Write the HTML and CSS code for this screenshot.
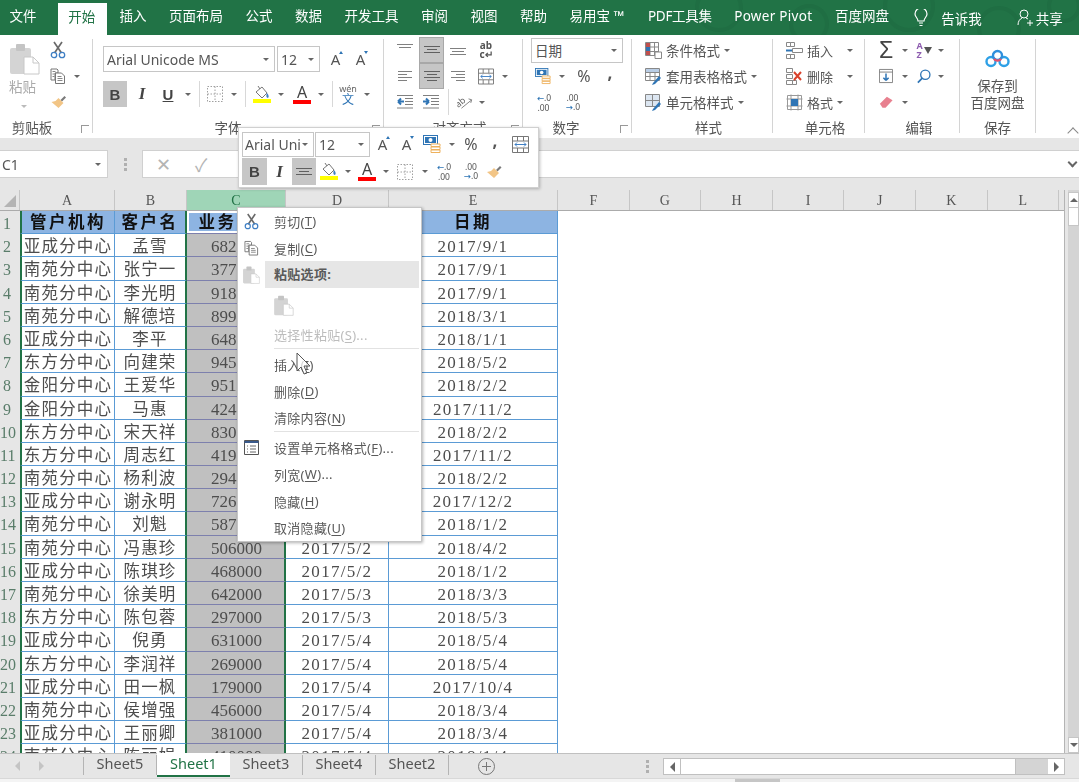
FILE: index.html
```html
<!DOCTYPE html>
<html lang="zh-CN">
<head>
    <meta charset="UTF-8" />
    <title>Excel</title>
    <link rel="stylesheet" href="styles.css">
</head>
<body>
<svg class="defs" width="0" height="0">
    <symbol id="i-scissors" viewBox="0 0 16 18">
        <path d="M4 1l7.5 11M12 1L4.500 12" stroke="#6a6a6a" stroke-width="1.7" fill="none"/>
        <circle cx="4" cy="14" r="2.700" stroke="#3f7fc4" stroke-width="1.300" fill="none"/>
        <circle cx="12" cy="14" r="2.700" stroke="#3f7fc4" stroke-width="1.300" fill="none"/>
    </symbol>
    <symbol id="i-copy" viewBox="0 0 16 16">
        <path d="M1 1h6l1 1v3H5v7H1z" fill="#fff" stroke="#777"/>
        <path d="M5.500 5h6l3 3v7.500h-9z" fill="#fff" stroke="#777"/>
        <path d="M7.500 8.500h4M7.500 10.500h5M7.500 12.500h5M2.500 3.500h3M2.500 6h2M2.500 8.500h2" stroke="#888"/>
    </symbol>
    <symbol id="i-brush" viewBox="0 0 16 14">
        <path d="M10 5l4-4 1.500 1.500-4 4z" fill="#7a7a7a"/>
        <path d="M8 3l5 5-2 2-3 3-7-6 4-1z" fill="#f2c586"/>
    </symbol>
    <symbol id="i-paste" viewBox="0 0 30 32">
        <rect x="0" y="5" width="21" height="26" rx="2" fill="#d4d4d4"/>
        <rect x="6" y="1" width="9" height="7" rx="1" fill="#c4c4c4"/>
        <path d="M14 14h9l6 6v11H14z" fill="#fff" stroke="#c8c8c8"/>
        <path d="M23 14v6h6" fill="none" stroke="#c8c8c8"/>
    </symbol>
    <symbol id="i-fill" viewBox="0 0 18 13">
        <path d="M3 6l6-5 5 6-5 5z" fill="#fff" stroke="#777"/>
        <path d="M5 0l2 3" stroke="#777"/>
        <path d="M14 7c2 2 2 4 1 5-2 0-2-3-1-5z" fill="#3f7fc4"/>
    </symbol>
    <symbol id="i-border" viewBox="0 0 16 16">
        <path d="M.5.5h15v15H.5zM8 .5v15M.5 8h15" fill="none" stroke="#a0a0a0" stroke-dasharray="1.500 1.500"/>
    </symbol>
    <symbol id="i-top" viewBox="0 0 16 12"><path d="M0 .5h16M2 3.500h12" stroke="#808080" fill="none"/></symbol>
    <symbol id="i-mid" viewBox="0 0 16 12"><path d="M0 2.500h16M3 5.500h10M0 8.500h16" stroke="#606060" fill="none"/></symbol>
    <symbol id="i-bot" viewBox="0 0 16 12"><path d="M0 4.500h16M2 7.500h12M0 10.500h16" stroke="#808080" fill="none"/></symbol>
    <symbol id="i-left" viewBox="0 0 14 12"><path d="M0 1.500h14M0 4.500h9M0 7.500h14M0 10.500h9" stroke="#808080" fill="none"/></symbol>
    <symbol id="i-center" viewBox="0 0 16 12"><path d="M0 1.500h16M3 4.500h10M0 7.500h16M3 10.500h10" stroke="#606060" fill="none"/></symbol>
    <symbol id="i-right" viewBox="0 0 14 12"><path d="M0 1.500h14M5 4.500h9M0 7.500h14M5 10.500h9" stroke="#808080" fill="none"/></symbol>
    <symbol id="i-merge" viewBox="0 0 17 17">
        <path d="M.5.5h16v16H.5zM.5 5h16M.5 12h16M5.500.5V5M11.500.5V5M5.500 12v4.500M11.500 12v4.500" fill="none" stroke="#777"/>
        <path d="M3 8.500h11M3 8.500l2-2M3 8.500l2 2M14 8.500l-2-2M14 8.500l-2 2" fill="none" stroke="#3f7fc4"/>
    </symbol>
    <symbol id="i-outdent" viewBox="0 0 16 14">
        <path d="M0 .5h16M8 3.500h8M8 6.500h8M8 9.500h8M0 13h16" stroke="#808080" fill="none"/>
        <path d="M1 6.500h6M1 6.500l3-3M1 6.500l3 3" stroke="#2f75b5" stroke-width="2" fill="none"/>
    </symbol>
    <symbol id="i-indent" viewBox="0 0 16 14">
        <path d="M0 .5h16M8 3.500h8M8 6.500h8M8 9.500h8M0 13h16" stroke="#808080" fill="none"/>
        <path d="M0 6.500h6M6 6.500l-3-3M6 6.500l-3 3" stroke="#2f75b5" stroke-width="2" fill="none"/>
    </symbol>
    <symbol id="i-orient" viewBox="0 0 18 16">
        <text x="0" y="13" font-size="10" font-family="Noto Sans" fill="#666" transform="rotate(-40 3 12)">ab</text>
        <path d="M5 15L16 6M13 4.500l3.500 1-1 3.500" stroke="#777" fill="none"/>
    </symbol>
    <symbol id="i-acct" viewBox="0 0 18 18">
        <rect x=".5" y=".5" width="14" height="9" fill="#fff" stroke="#2f75b5"/>
        <rect x="2" y="2" width="11" height="6" fill="#2f75b5"/>
        <circle cx="7.500" cy="5" r="2" fill="#fff"/>
        <path d="M8 9h9v2.500H8zM8 12h9v2.500H8zM8 15h9v2.500H8z" fill="#fff" stroke="#eeb15c"/>
    </symbol>
    <symbol id="i-cond" viewBox="0 0 17 17">
        <path d="M.5.5h13v13H.5zM5 .5v13M9.500.5v13M.5 5h13M.5 9.500h13" fill="#fff" stroke="#888"/>
        <path d="M1 1h4v4H1z" fill="#c0504d"/><path d="M1 5h4v4H1z" fill="#2f75b5"/><path d="M1 9h4v4H1z" fill="#c0504d"/>
        <path d="M10 10h6.500v6.500H10z" fill="#fff" stroke="#888"/>
    </symbol>
    <symbol id="i-table" viewBox="0 0 17 17">
        <path d="M.5.5h14v12H.5zM5 .5v12M10 .5v12M.5 4.500h14M.5 8.500h14" fill="#fff" stroke="#888"/>
        <path d="M1 1h13v3H1z" fill="#b9cde5"/>
        <path d="M8 15l6-7 2 2-6 6-3 1z" fill="#2f75b5"/>
    </symbol>
    <symbol id="i-style" viewBox="0 0 17 17">
        <path d="M.5.5h14v12H.5zM7.500.5v12M.5 6.500h14" fill="#dce6f1" stroke="#888"/>
        <path d="M8 15l6-7 2 2-6 6-3 1z" fill="#2f75b5"/>
    </symbol>
    <symbol id="i-insert" viewBox="0 0 17 17">
        <path d="M.5.5h4v4h-4zM4.500.5h4v4h-4zM.5 12.500h4v4h-4zM4.500 12.500h4v4h-4z" fill="#fff" stroke="#888"/>
        <path d="M6.500 6.500h10v4h-10z" fill="#fff" stroke="#888"/>
        <path d="M0 8.500h6" stroke="#2f75b5" stroke-width="2"/>
    </symbol>
    <symbol id="i-delete" viewBox="0 0 17 17">
        <path d="M.5.5h6v4h-6zM.5 12.500h6v4h-6zM6.500 12.500h4v4h-4zM.5 6.500h6v4h-6z" fill="#fff" stroke="#888"/>
        <path d="M8 4l7 8M15 4l-7 8" stroke="#d9412b" stroke-width="2"/>
    </symbol>
    <symbol id="i-format" viewBox="0 0 17 17">
        <path d="M1.500 1.500h14v14h-14zM.5 5h16M.5 12h16M5 .5v16M12 .5v16" fill="#fff" stroke="#999"/>
        <path d="M5 5h7v7H5z" fill="#2f75b5"/>
    </symbol>
    <symbol id="i-down" viewBox="0 0 16 16">
        <path d="M.5.5h15v15H.5z" fill="#fff" stroke="#777"/>
        <path d="M.5 3.500h15" stroke="#777"/>
        <path d="M8 5v8M8 13l-3-3M8 13l3-3" stroke="#2f75b5" stroke-width="1.700" fill="none"/>
    </symbol>
    <symbol id="i-search" viewBox="0 0 16 16">
        <circle cx="9.500" cy="6.500" r="5.300" fill="none" stroke="#2f75b5" stroke-width="1.500"/>
        <path d="M6 10.500L1 15.500" stroke="#2f75b5" stroke-width="2"/>
    </symbol>
    <symbol id="i-eraser" viewBox="0 0 16 14">
        <path d="M1 9l8-8 6.500 4-8 8.500H4z" fill="#e8808f"/>
    </symbol>
    <symbol id="i-format-list" viewBox="0 0 15 15">
        <path d="M.5.500h14v14H.5z" fill="#fff" stroke="#555"/>
        <path d="M.5 1h14v2h-14z" fill="#3a5a8c"/>
        <path d="M3 6h1M3 9h1M3 12h1M6 6h6M6 9h6M6 12h6" stroke="#666"/>
    </symbol>
</svg>

<div class="app">
    <nav class="tabs">
        <svg class="swirl" width="400" height="35" viewBox="0 0 400 35"><g fill="none" stroke="#1f6e43" stroke-width="4"><circle cx="40" cy="8" r="22"/><circle cx="130" cy="24" r="18"/><circle cx="230" cy="6" r="24"/><circle cx="320" cy="28" r="20"/><circle cx="385" cy="6" r="15"/></g></svg>
        <a class="tab first">文件</a>
        <a class="tab active">开始</a>
        <a class="tab">插入</a>
        <a class="tab">页面布局</a>
        <a class="tab">公式</a>
        <a class="tab">数据</a>
        <a class="tab">开发工具</a>
        <a class="tab">审阅</a>
        <a class="tab">视图</a>
        <a class="tab">帮助</a>
        <a class="tab">易用宝 ™</a>
        <a class="tab pdf">PDF工具集</a>
        <a class="tab pp">Power Pivot</a>
        <a class="tab">百度网盘</a>
        <span class="tell">
            <svg width="14" height="18" viewBox="0 0 14 18"><path d="M4 12c0-3-3-4-3-7a6 6 0 0 1 12 0c0 3-3 4-3 7zM5 14h4M5.500 16.500h3" fill="none" stroke="#fff" stroke-width="1.200"/></svg>
            告诉我
        </span>
        <span class="share">
            <svg width="16" height="18" viewBox="0 0 16 18"><circle cx="7" cy="5" r="4" fill="none" stroke="#fff"/><path d="M1 16c0-4 2-6 4-7M9 9l2 1M10 14h6M13 11v6" fill="none" stroke="#fff"/></svg>
            共享
        </span>
    </nav>

    <div class="ribbon">
        <section class="group g-clip">
            <div class="clip-body">
                <div class="paste">
                    <svg width="30" height="32"><use href="#i-paste"/></svg>
                    <span>粘贴</span>
                    <i class="car light"></i>
                </div>
                <div class="rows3 clip-tools">
                    <div class="row"><svg width="16" height="18"><use href="#i-scissors"/></svg></div>
                    <div class="row"><svg width="16" height="16"><use href="#i-copy"/></svg><i class="car"></i></div>
                    <div class="row"><svg width="17" height="14"><use href="#i-brush"/></svg></div>
                </div>
            </div>
            <div class="glabel">剪贴板</div>
            <i class="launch"></i>
        </section>

        <section class="group g-font">
            <div class="row font-row1">
                <div class="sel w172">Arial Unicode MS<i class="car"></i></div>
                <div class="sel w43">12<i class="car"></i></div>
                <div class="it w34"><span class="grow">A<i class="up"></i></span></div>
                <div class="it w16"><span class="grow">A<i class="dn"></i></span></div>
            </div>
            <div class="row font-row2">
                <div class="it w24 on bold">B</div>
                <div class="it w30 ital">I</div>
                <div class="it w22 under">U</div>
                <div class="it w18"><i class="car"></i></div>
                <div class="it w4"><i class="vsep"></i></div>
                <div class="it w28"><svg width="16" height="16"><use href="#i-border"/></svg></div>
                <div class="it w10"><i class="car"></i></div>
                <div class="it w12"><i class="vsep"></i></div>
                <div class="it w22 colored"><svg width="18" height="13"><use href="#i-fill"/></svg><i class="bar yellow"></i></div>
                <div class="it w16"><i class="car"></i></div>
                <div class="it w26 colored"><span class="letter">A</span><i class="bar red"></i></div>
                <div class="it w12"><i class="car"></i></div>
                <div class="it w10"><i class="vsep"></i></div>
                <div class="it w22 wen"><small>wén</small><span>文</span></div>
                <div class="it w16"><i class="car"></i></div>
            </div>
            <div class="glabel">字体</div>
            <i class="launch"></i>
        </section>

        <section class="group g-align">
            <div class="rows3">
                <div class="row">
                    <div class="it w16"><svg width="16" height="12"><use href="#i-top"/></svg></div>
                    <i class="w6"></i>
                    <div class="it w25 on box"><svg width="16" height="12"><use href="#i-mid"/></svg></div>
                    <i class="w6"></i>
                    <div class="it w16"><svg width="16" height="12"><use href="#i-bot"/></svg></div>
                    <i class="w12"></i>
                    <div class="it w16 wrap-ic">ab<br>c↵</div>
                </div>
                <div class="row">
                    <div class="it w16"><svg width="14" height="12"><use href="#i-left"/></svg></div>
                    <i class="w6"></i>
                    <div class="it w25 on box"><svg width="16" height="12"><use href="#i-center"/></svg></div>
                    <i class="w6"></i>
                    <div class="it w16"><svg width="14" height="12"><use href="#i-right"/></svg></div>
                    <i class="w12"></i>
                    <div class="it w16"><svg width="17" height="17"><use href="#i-merge"/></svg></div>
                    <div class="it w22"><i class="car"></i></div>
                </div>
                <div class="row">
                    <div class="it w16"><svg width="16" height="14"><use href="#i-outdent"/></svg></div>
                    <i class="w10"></i>
                    <div class="it w16"><svg width="16" height="14"><use href="#i-indent"/></svg></div>
                    <div class="it w18"><i class="vsep"></i></div>
                    <div class="it w16"><svg width="18" height="16"><use href="#i-orient"/></svg></div>
                    <div class="it w18"><i class="car"></i></div>
                </div>
            </div>
            <div class="glabel">对齐方式</div>
            <i class="launch"></i>
        </section>

        <section class="group g-num">
            <div class="rows3">
                <div class="row"><div class="sel w92 date-sel">日期<i class="car"></i></div></div>
                <div class="row">
                    <i class="w4"></i>
                    <div class="it w16"><svg width="18" height="18"><use href="#i-acct"/></svg></div>
                    <div class="it w22"><i class="car"></i></div>
                    <div class="it w22 pct">%</div>
                    <div class="it w30 comma">,</div>
                </div>
                <div class="row">
                    <i class="w6"></i>
                    <div class="it w13 dec"><b>←</b>.0<br>.00</div>
                    <i class="w16"></i>
                    <div class="it w13 dec">.00<br><b>→</b>.0</div>
                </div>
            </div>
            <div class="glabel">数字</div>
            <i class="launch"></i>
        </section>

        <section class="group g-style">
            <div class="rows3">
                <div class="row cmd"><svg width="17" height="17"><use href="#i-cond"/></svg>条件格式<i class="car"></i></div>
                <div class="row cmd"><svg width="17" height="17"><use href="#i-table"/></svg>套用表格格式<i class="car"></i></div>
                <div class="row cmd"><svg width="17" height="17"><use href="#i-style"/></svg>单元格样式<i class="car"></i></div>
            </div>
            <div class="glabel">样式</div>
        </section>

        <section class="group g-cell">
            <div class="rows3">
                <div class="row cmd"><svg width="17" height="17"><use href="#i-insert"/></svg>插入<i class="car far"></i></div>
                <div class="row cmd"><svg width="17" height="17"><use href="#i-delete"/></svg>删除<i class="car far"></i></div>
                <div class="row cmd"><svg width="17" height="17"><use href="#i-format"/></svg>格式<i class="car"></i></div>
            </div>
            <div class="glabel">单元格</div>
        </section>

        <section class="group g-edit">
            <div class="rows3">
                <div class="row">
                    <div class="it w14 sigma">Σ</div>
                    <div class="it w24"><i class="car"></i></div>
                    <div class="it w14 sort"><span>A<br>Z</span><i class="funnel"></i></div>
                    <div class="it w20"><i class="car"></i></div>
                </div>
                <div class="row">
                    <div class="it w14"><svg width="16" height="16"><use href="#i-down"/></svg></div>
                    <div class="it w24"><i class="car"></i></div>
                    <div class="it w14"><svg width="16" height="16"><use href="#i-search"/></svg></div>
                    <div class="it w20"><i class="car"></i></div>
                </div>
                <div class="row">
                    <div class="it w14"><svg width="16" height="14"><use href="#i-eraser"/></svg></div>
                    <div class="it w24"><i class="car"></i></div>
                </div>
            </div>
            <div class="glabel">编辑</div>
        </section>

        <section class="group g-save">
            <div class="save-body">
                <svg width="25" height="19" viewBox="0 0 25 19">
                    <circle cx="6" cy="12.500" r="4.500" fill="none" stroke="#2ea0e6" stroke-width="2.400"/>
                    <circle cx="19" cy="12.500" r="4.500" fill="none" stroke="#2ea0e6" stroke-width="2.400"/>
                    <circle cx="12.500" cy="6.500" r="4.500" fill="none" stroke="#2f8fdc" stroke-width="2.400"/>
                    <path d="M9 10a4.500 4.500 0 0 0 7 0" fill="none" stroke="#e8506a" stroke-width="2.400"/>
                </svg>
                <span>保存到<br>百度网盘</span>
            </div>
            <div class="glabel">保存</div>
        </section>

        <div class="collapse"><i></i></div>
    </div>

    <div class="fbar">
        <div class="namebox">C1<i class="car"></i></div>
        <div class="fdots"><i></i><i></i><i></i></div>
        <div class="finput">
            <span class="fx">✕</span>
            <span class="fx">✓</span>
            <i class="fchev"></i>
        </div>
    </div>

    <div class="sheet-area">
        <div class="sheet-main">
            <div class="colhead">
                <div class="corner"><i></i></div>
                <div class="ch ca">A</div>
                <div class="ch cb">B</div>
                <div class="ch cc on-col">C</div>
                <div class="ch cd">D</div>
                <div class="ch ce">E</div>
                <div class="ch cx">F</div>
                <div class="ch cx">G</div>
                <div class="ch cx">H</div>
                <div class="ch cx">I</div>
                <div class="ch cx">J</div>
                <div class="ch cx">K</div>
                <div class="ch cx">L</div>
            </div>
            <div class="grid">
                <div class="r">1</div><div class="c a h">管户机构</div><div class="c b h">客户名</div><div class="c n h active">业务金额</div><div class="c d h"></div><div class="c e h">日期</div>
                <div class="r">2</div><div class="c a">亚成分中心</div><div class="c b">孟雪</div><div class="c n">682000</div><div class="c d"></div><div class="c e">2017/9/1</div>
                <div class="r">3</div><div class="c a">南苑分中心</div><div class="c b">张宁一</div><div class="c n">377000</div><div class="c d"></div><div class="c e">2017/9/1</div>
                <div class="r">4</div><div class="c a">南苑分中心</div><div class="c b">李光明</div><div class="c n">918000</div><div class="c d"></div><div class="c e">2017/9/1</div>
                <div class="r">5</div><div class="c a">南苑分中心</div><div class="c b">解德培</div><div class="c n">899000</div><div class="c d"></div><div class="c e">2018/3/1</div>
                <div class="r">6</div><div class="c a">亚成分中心</div><div class="c b">李平</div><div class="c n">648000</div><div class="c d"></div><div class="c e">2018/1/1</div>
                <div class="r">7</div><div class="c a">东方分中心</div><div class="c b">向建荣</div><div class="c n">945000</div><div class="c d"></div><div class="c e">2018/5/2</div>
                <div class="r">8</div><div class="c a">金阳分中心</div><div class="c b">王爱华</div><div class="c n">951000</div><div class="c d"></div><div class="c e">2018/2/2</div>
                <div class="r">9</div><div class="c a">金阳分中心</div><div class="c b">马惠</div><div class="c n">424000</div><div class="c d"></div><div class="c e">2017/11/2</div>
                <div class="r">10</div><div class="c a">东方分中心</div><div class="c b">宋天祥</div><div class="c n">830000</div><div class="c d"></div><div class="c e">2018/2/2</div>
                <div class="r">11</div><div class="c a">东方分中心</div><div class="c b">周志红</div><div class="c n">419000</div><div class="c d"></div><div class="c e">2017/11/2</div>
                <div class="r">12</div><div class="c a">南苑分中心</div><div class="c b">杨利波</div><div class="c n">294000</div><div class="c d"></div><div class="c e">2018/2/2</div>
                <div class="r">13</div><div class="c a">亚成分中心</div><div class="c b">谢永明</div><div class="c n">726000</div><div class="c d"></div><div class="c e">2017/12/2</div>
                <div class="r">14</div><div class="c a">南苑分中心</div><div class="c b">刘魁</div><div class="c n">587000</div><div class="c d"></div><div class="c e">2018/1/2</div>
                <div class="r">15</div><div class="c a">南苑分中心</div><div class="c b">冯惠珍</div><div class="c n">506000</div><div class="c d">2017/5/2</div><div class="c e">2018/4/2</div>
                <div class="r">16</div><div class="c a">亚成分中心</div><div class="c b">陈琪珍</div><div class="c n">468000</div><div class="c d">2017/5/2</div><div class="c e">2018/1/2</div>
                <div class="r">17</div><div class="c a">南苑分中心</div><div class="c b">徐美明</div><div class="c n">642000</div><div class="c d">2017/5/3</div><div class="c e">2018/3/3</div>
                <div class="r">18</div><div class="c a">东方分中心</div><div class="c b">陈包蓉</div><div class="c n">297000</div><div class="c d">2017/5/3</div><div class="c e">2018/5/3</div>
                <div class="r">19</div><div class="c a">亚成分中心</div><div class="c b">倪勇</div><div class="c n">631000</div><div class="c d">2017/5/4</div><div class="c e">2018/5/4</div>
                <div class="r">20</div><div class="c a">东方分中心</div><div class="c b">李润祥</div><div class="c n">269000</div><div class="c d">2017/5/4</div><div class="c e">2018/5/4</div>
                <div class="r">21</div><div class="c a">亚成分中心</div><div class="c b">田一枫</div><div class="c n">179000</div><div class="c d">2017/5/4</div><div class="c e">2017/10/4</div>
                <div class="r">22</div><div class="c a">南苑分中心</div><div class="c b">侯增强</div><div class="c n">456000</div><div class="c d">2017/5/4</div><div class="c e">2018/3/4</div>
                <div class="r">23</div><div class="c a">亚成分中心</div><div class="c b">王丽卿</div><div class="c n">381000</div><div class="c d">2017/5/4</div><div class="c e">2018/3/4</div>
                <div class="r">24</div><div class="c a">南苑分中心</div><div class="c b">陈丽娟</div><div class="c n">410000</div><div class="c d">2017/5/4</div><div class="c e">2018/1/4</div>
            </div>
        </div>
        <div class="vscroll">
            <div class="sbtn up-btn"><i class="tri-up"></i></div>
            <div class="thumb"></div>
            <div class="sbtn down-btn"><i class="tri-down"></i></div>
        </div>
    </div>

    <div class="sheetbar">
        <div class="tab-arrows"><i class="tri-l"></i><i class="tri-r"></i></div>
        <div class="stab">Sheet5</div>
        <div class="stab current">Sheet1</div>
        <div class="stab">Sheet3</div>
        <div class="stab">Sheet4</div>
        <div class="stab">Sheet2</div>
        <div class="addsheet"><svg width="15" height="15" viewBox="0 0 15 15"><path d="M7.500 3v9M3 7.500h9" stroke="#777" fill="none"/></svg></div>
        <div class="fdots bar-dots"><i></i><i></i><i></i></div>
        <div class="hscroll">
            <div class="sbtn"><i class="tri-l dark"></i></div>
            <div class="hthumb"></div>
            <div class="hrest"></div>
            <div class="sbtn"><i class="tri-r dark"></i></div>
        </div>
    </div>
    <div class="statusline"><i></i></div>

    <!-- floating toolbar -->
    <div class="mini">
        <div class="row mini-row">
            <div class="sel w72">Arial Uni<i class="car"></i></div>
            <div class="sel w55">12<i class="car"></i></div>
            <div class="it w28"><span class="grow">A<i class="up"></i></span></div>
            <div class="it w20"><span class="grow">A<i class="dn"></i></span></div>
            <div class="it w28"><svg width="18" height="18"><use href="#i-acct"/></svg></div>
            <div class="it w12"><i class="car"></i></div>
            <div class="it w26 pct">%</div>
            <div class="it w22 comma">,</div>
            <div class="it w28"><svg width="17" height="17"><use href="#i-merge"/></svg></div>
        </div>
        <div class="row mini-row2">
            <div class="it w25 on bold">B</div>
            <div class="it w25 ital">I</div>
            <div class="it w24 on"><svg width="16" height="12"><use href="#i-mid"/></svg></div>
            <div class="it w26 colored"><svg width="18" height="13"><use href="#i-fill"/></svg><i class="bar yellow"></i></div>
            <div class="it w12"><i class="car"></i></div>
            <div class="it w26 colored"><span class="letter">A</span><i class="bar red"></i></div>
            <div class="it w12"><i class="car"></i></div>
            <div class="it w26"><svg width="16" height="16"><use href="#i-border"/></svg></div>
            <div class="it w14"><i class="car"></i></div>
            <div class="it w24 dec"><b>←</b>.0<br>.00</div>
            <div class="it w30 dec">.00<br><b>→</b>.0</div>
            <div class="it w16"><svg width="17" height="14"><use href="#i-brush"/></svg></div>
        </div>
    </div>

    <!-- context menu -->
    <div class="menu">
        <div class="mi"><span class="mi-ic"><svg width="15" height="17"><use href="#i-scissors"/></svg></span>剪切(<u>T</u>)</div>
        <div class="mi"><span class="mi-ic"><svg width="15" height="16"><use href="#i-copy"/></svg></span>复制(<u>C</u>)</div>
        <div class="mi"><span class="mi-ic"><svg width="17" height="18"><use href="#i-paste"/></svg></span><span class="mi-title">粘贴选项:</span></div>
        <div class="mi-paste"><svg width="20" height="21"><use href="#i-paste"/></svg></div>
        <div class="mi off"><span class="mi-ic"></span>选择性粘贴(<u>S</u>)...</div>
        <div class="msep"></div>
        <div class="mi"><span class="mi-ic"></span>插入(<u>I</u>)</div>
        <div class="mi"><span class="mi-ic"></span>删除(<u>D</u>)</div>
        <div class="mi"><span class="mi-ic"></span>清除内容(<u>N</u>)</div>
        <div class="msep"></div>
        <div class="mi"><span class="mi-ic"><svg width="15" height="15"><use href="#i-format-list"/></svg></span>设置单元格格式(<u>F</u>)...</div>
        <div class="mi"><span class="mi-ic"></span>列宽(<u>W</u>)...</div>
        <div class="mi"><span class="mi-ic"></span>隐藏(<u>H</u>)</div>
        <div class="mi"><span class="mi-ic"></span>取消隐藏(<u>U</u>)</div>
    </div>

    <svg class="pointer" width="16" height="24" viewBox="0 0 16 24"><path d="M1 1v18l4-4 3 7 3-1-3-7h6z" fill="#fff" fill-opacity=".75" stroke="#555"/></svg>
</div>
</body>
</html>
```

FILE: styles.css
```css
* {
    box-sizing: border-box;
}

body {
    margin: 0;
    width: 1079px;
    height: 782px;
    overflow: hidden;
    background: #e6e6e6;
    font-family: "Noto Sans", "Noto Sans CJK SC", sans-serif;
    color: #555;
}

i {
    display: block;
    font-style: normal;
}

.defs {
    position: absolute;
}

.app {
    position: relative;
    width: 1079px;
    height: 782px;
    overflow: hidden;
    filter: blur(0.45px);
}

/* title tabs */
.tabs {
    position: relative;
    display: flex;
    align-items: center;
    height: 35px;
    background: #217346;
    color: #fff;
    font-size: 13.5px;
}

.swirl {
    position: absolute;
    right: 0;
    top: 0;
}

.tab {
    position: relative;
    padding: 0 11.25px 2px;
    line-height: 33px;
    white-space: nowrap;
}

.tab.first {
    padding-left: 9.5px;
}

.tab.active {
    margin: 3px 1px 0 10.5px;
    padding: 0 12px 0 10px;
    height: 32px;
    line-height: 28px;
    background: #fff;
    color: #217346;
}

.tab.pdf {
    margin-left: 1.5px;
    letter-spacing: -0.3px;
}

.tab.pp {
    letter-spacing: 0.3px;
}

.tell,
.share {
    position: relative;
    display: flex;
    align-items: center;
    gap: 13px;
    white-space: nowrap;
}

.tell {
    margin-left: 14px;
}

.share {
    margin-left: 35px;
    gap: 3px;
}

/* ribbon */
.ribbon {
    display: flex;
    height: 103px;
    padding-top: 4px;
    background: #fff;
    font-size: 13.5px;
}

.group {
    position: relative;
    display: flex;
    flex-direction: column;
    flex: none;
    height: 94px;
    border-right: 1px solid #d4d4d4;
}

.glabel {
    margin-top: auto;
    margin-bottom: -1px;
    height: 12px;
    line-height: 12px;
    font-size: 13.5px;
    text-align: center;
    white-space: nowrap;
}

.launch {
    position: absolute;
    right: 3px;
    bottom: 0;
    width: 8px;
    height: 8px;
    border: 1px solid #999;
    border-width: 1px 0 0 1px;
}

.g-clip { width: 93px; }
.g-clip .glabel { padding-right: 28px; }
.g-font { width: 291px; padding-left: 10px; }
.g-font .glabel { padding-right: 30px; }
.g-align { width: 139px; padding-left: 13px; }
.g-num { width: 109px; padding-left: 8px; }
.g-num .glabel { padding-right: 30px; }
.g-style { width: 141px; padding-left: 13px; }
.g-cell { width: 92px; padding-left: 13px; }
.g-edit { width: 95px; padding-left: 14px; }
.g-save { width: 76px; }

.row {
    display: flex;
    align-items: center;
}

.rows3 {
    display: grid;
    grid-template-rows: 26px 26px 26px;
    margin-top: -2px;
}

.it {
    display: flex;
    align-items: center;
    justify-content: center;
    flex: none;
    height: 100%;
}

.w4 { width: 4px; flex: none; }
.w6 { width: 6px; flex: none; }
.w10 { width: 10px; flex: none; }
.w12 { width: 12px; flex: none; }
.w13 { width: 13px; flex: none; }
.w14 { width: 14px; flex: none; }
.w16 { width: 16px; flex: none; }
.w18 { width: 18px; flex: none; }
.w20 { width: 20px; flex: none; }
.w22 { width: 22px; flex: none; }
.w24 { width: 24px; flex: none; }
.w25 { width: 25px; flex: none; }
.w26 { width: 26px; flex: none; }
.w28 { width: 28px; flex: none; }
.w30 { width: 30px; flex: none; }
.w34 { width: 34px; flex: none; }
.w43 { width: 43px; flex: none; }
.w55 { width: 55px; flex: none; }
.w72 { width: 72px; flex: none; }
.w92 { width: 92px; flex: none; }
.w172 { width: 172px; flex: none; }

.car {
    flex: none;
    width: 0;
    height: 0;
    border-left: 3px solid transparent;
    border-right: 3px solid transparent;
    border-top: 3.5px solid #666;
}

.car.light {
    border-top-color: #bbb;
}

.vsep {
    width: 1px;
    height: 26px;
    background: #d8d8d8;
}

.on {
    background: #c6c6c6;
}

.box {
    border: 1px solid #a8a8a8;
}

/* clipboard */
.clip-body {
    display: flex;
    padding: 4px 0 0 10px;
}

.paste {
    display: flex;
    flex-direction: column;
    align-items: flex-start;
    width: 40px;
    font-size: 13.5px;
    line-height: 18px;
    color: #aaa;
}

.paste span {
    margin: 3px 0 9px -1px;
}

.paste .car {
    margin-left: 11px;
}

.clip-tools {
    margin-top: -6px;
}

.clip-tools .row {
    gap: 8px;
}

/* font group */
.sel {
    display: flex;
    align-items: center;
    justify-content: space-between;
    height: 26px;
    padding: 0 5px 0 3px;
    background: #fff;
    border: 1px solid #c6c6c6;
    font-size: 14px;
    white-space: nowrap;
}

.font-row1 {
    height: 26px;
    margin-top: 7px;
    gap: 0;
}

.font-row1 .sel + .sel {
    margin-left: 2px;
}

.font-row2 {
    height: 26px;
    margin-top: 9px;
}

.grow {
    position: relative;
    font-size: 15px;
    line-height: 18px;
    padding-right: 3px;
}

.grow i {
    position: absolute;
    right: 0;
    width: 0;
    border-left: 2.500px solid transparent;
    border-right: 2.500px solid transparent;
}

.grow .up {
    top: 1px;
    border-bottom: 3px solid #2f75b5;
}

.grow .dn {
    top: 1px;
    border-top: 3px solid #2f75b5;
}

.bold,
.ital,
.under {
    font-family: "Liberation Sans", sans-serif;
    font-size: 15px;
    color: #444;
}

.bold {
    font-weight: bold;
}

.ital {
    font-family: "Liberation Serif", serif;
    font-style: italic;
    font-size: 17px;
    font-weight: bold;
}

.under {
    text-decoration: underline;
    font-weight: bold;
}

.colored {
    flex-direction: column;
    justify-content: center;
}

.bar {
    width: 18px;
    height: 4px;
}

.yellow { background: #ffff00; }
.red { background: #ff0000; }

.letter {
    font-size: 16px;
    line-height: 15px;
    color: #444;
}

.wen {
    flex-direction: column;
    color: #2f75b5;
    font-size: 12px;
    line-height: 11px;
}

.wen small {
    font-size: 9px;
    color: #666;
}

/* alignment */
.wrap-ic {
    font-size: 10px;
    line-height: 9px;
    text-align: center;
    color: #555;
    font-weight: bold;
}

/* number */
.date-sel {
    height: 25px;
    font-size: 13.5px;
}

.pct {
    font-size: 16px;
}

.comma {
    padding-bottom: 8px;
    font-size: 17px;
    font-weight: bold;
}

.dec {
    display: block;
    height: auto;
    font-size: 8.5px;
    line-height: 9px;
    text-align: center;
    white-space: nowrap;
}

.dec b {
    font-size: 7px;
    color: #2f75b5;
}

/* styles, cells */
.cmd {
    gap: 4px;
    white-space: nowrap;
}

.g-cell .cmd {
    font-size: 13px;
}

.car.far {
    margin-left: 10px;
}

.sigma {
    font-family: "Liberation Sans", sans-serif;
    font-size: 23px;
    color: #444;
}

.sort {
    gap: 1px;
}

.sort span {
    font-size: 9px;
    line-height: 9px;
    color: #8e5db0;
    font-weight: bold;
}

.funnel {
    width: 0;
    height: 0;
    border-left: 4px solid transparent;
    border-right: 4px solid transparent;
    border-top: 7px solid #555;
}

/* save */
.save-body {
    display: flex;
    flex-direction: column;
    align-items: center;
    padding-top: 10px;
    line-height: 17px;
    text-align: center;
    white-space: nowrap;
}

.save-body span {
    margin-top: 10px;
}

.collapse {
    position: relative;
    flex: 1;
    height: 94px;
}

.collapse i {
    position: absolute;
    right: 2px;
    bottom: -4px;
    width: 8px;
    height: 8px;
    border: solid #888;
    border-width: 1px 0 0 1px;
    transform: rotate(45deg);
}

/* formula bar */
.fbar {
    display: flex;
    height: 52px;
    padding: 12px 0;
}

.namebox {
    display: flex;
    align-items: center;
    justify-content: space-between;
    width: 108px;
    padding: 0 6px 0 2px;
    background: #fff;
    border: 1px solid #d0d0d0;
    border-left: 0;
    font-size: 14px;
}

.fdots {
    display: flex;
    flex-direction: column;
    align-items: center;
    justify-content: center;
    gap: 2px;
    width: 34px;
}

.fdots i {
    width: 3px;
    height: 3px;
    background: #b0b0b0;
}

.finput {
    position: relative;
    display: flex;
    align-items: center;
    flex: 1;
    padding-left: 13px;
    background: #fff;
    border: 1px solid #d0d0d0;
    border-right: 0;
}

.fx {
    width: 39px;
    font-size: 18px;
    color: #b4b4b4;
}

.fchev {
    position: absolute;
    right: 3px;
    top: 8px;
    width: 7px;
    height: 7px;
    border: solid #666;
    border-width: 0 2px 2px 0;
    transform: rotate(45deg);
}

/* sheet */
.sheet-area {
    display: flex;
    height: 563px;
}

.sheet-main {
    width: 1065px;
    border-right: 1px solid #b4b4b4;
    overflow: hidden;
}

.colhead {
    display: flex;
    height: 21px;
    border-bottom: 1px solid #ababab;
    font-family: "Liberation Serif", serif;
    font-size: 14px;
    color: #555;
}

.corner {
    position: relative;
    width: 20px;
    border-right: 1px solid #c6c6c6;
}

.corner i {
    position: absolute;
    right: 3px;
    bottom: 3px;
    width: 0;
    height: 0;
    border-left: 12px solid transparent;
    border-bottom: 12px solid #b4b4b4;
}

.ch {
    flex: none;
    height: 20px;
    line-height: 22px;
    text-align: center;
    border-right: 1px solid #c6c6c6;
}

.ca { width: 95px; }
.cb { width: 72px; }
.cc { width: 99px; }
.cd { width: 103px; }
.ce { width: 169px; }
.cx { width: 71.6px; }

.on-col {
    background: #9fd5b7;
    color: #217346;
}

.grid {
    display: grid;
    grid-template-columns: 20px 95px 72px 99px 103px 169px;
    grid-auto-rows: 23.2px;
    height: 542px;
    margin-right: -1px;
    background: #fff;
    background-image: linear-gradient(#e6e6e6, #e6e6e6);
    background-size: 20px 100%;
    background-repeat: no-repeat;
    overflow: hidden;
}

.r {
    width: 14px;
    text-align: center;
    font-family: "Liberation Serif", serif;
    font-size: 16px;
    line-height: 26px;
    color: #5a7d6a;
}

.c {
    border-right: 1px solid #5b9bd5;
    border-bottom: 1px solid #5b9bd5;
    text-align: center;
    font-family: "Liberation Serif", "Noto Sans CJK SC", serif;
    font-size: 17px;
    line-height: 26px;
    color: #4d4d4d;
    white-space: nowrap;
    overflow: hidden;
}

.c.a,
.c.b {
    font-size: 16.5px;
    line-height: 26px;
    letter-spacing: 1.2px;
}

.c.a {
    border-left: 2px solid #217346;
}

.c.b {
    border-right: 2px solid #217346;
}

.c.n {
    padding-left: 2px;
    border-right: 2px solid #217346;
    border-bottom-color: #7d80ad;
    background: #c0c0c0;
}

.c.d,
.c.e {
    letter-spacing: 1.3px;
}

.c.h {
    background: #8db4e2;
    font-size: 16.5px;
    font-weight: bold;
    line-height: 24px;
    letter-spacing: 2.5px;
    color: #111;
}

.c.active {
    box-shadow: inset 0 0 0 2px #fff;
}

/* scrollbars */
.vscroll {
    display: flex;
    flex-direction: column;
    width: 14px;
    padding-left: 3px;
    padding-top: 2px;
    background: linear-gradient(90deg, #e6e6e6 3px, #d4d4d4 3px);
}

.sbtn {
    display: flex;
    align-items: center;
    justify-content: center;
    height: 16px;
    background: #fff;
    border: 1px solid #c6c6c6;
}

.thumb {
    height: 18px;
    background: #fff;
    border: 1px solid #c6c6c6;
    border-top: 0;
}

.down-btn {
    margin-top: auto;
}

.tri-up,
.tri-down {
    width: 0;
    height: 0;
    border-left: 4px solid transparent;
    border-right: 4px solid transparent;
}

.tri-up { border-bottom: 4px solid #666; }
.tri-down { border-top: 4px solid #666; }

/* sheet tabs */
.sheetbar {
    display: flex;
    align-items: stretch;
    height: 25px;
    background: #e6e6e6;
    border-top: 1px solid #c0c0c0;
    font-size: 14.5px;
}

.tab-arrows {
    display: flex;
    align-items: center;
    gap: 19px;
    width: 84px;
    padding-left: 15px;
    margin: 3px 0;
    border-right: 1px solid #b4b4b4;
}

.tri-l,
.tri-r {
    width: 0;
    height: 0;
    border-top: 5px solid transparent;
    border-bottom: 5px solid transparent;
}

.tri-l { border-right: 5px solid #c4c4c4; }
.tri-r { border-left: 5px solid #c4c4c4; }
.tri-l.dark { border-right-color: #666; }
.tri-r.dark { border-left-color: #666; }

.stab {
    width: 73px;
    margin: 1px 0 3px;
    line-height: 16px;
    text-align: center;
    border-right: 1px solid #b4b4b4;
}

.stab.current {
    margin: -1px 0 1px;
    padding-top: 1px;
    line-height: 18px;
    background: #fff;
    color: #217346;
    border-right: 0;
    border-bottom: 2px solid #217346;
}

.addsheet {
    width: 17px;
    height: 17px;
    margin: 4px 0 0 29px;
    border: 1px solid #777;
    border-radius: 50%;
}

.addsheet svg {
    display: block;
}

.bar-dots {
    margin-left: 135px;
}

.hscroll {
    display: flex;
    width: 402px;
    height: 17px;
    margin: 4px 0 0 -1px;
    border: 1px solid #c0c0c0;
}

.hscroll .sbtn {
    width: 16px;
    height: 100%;
    border: 0;
}

.hthumb {
    flex: 1;
    background: #fff;
    border: 1px solid #c0c0c0;
    border-width: 0 1px;
}

.hrest {
    width: 32px;
    background: #d4d4d4;
}

.statusline {
    position: relative;
    height: 4px;
    background: #f4f4f4;
    border-top: 1px solid #d8d8d8;
}

.statusline i {
    position: absolute;
    left: 735px;
    top: 0;
    width: 45px;
    height: 3px;
    background: #c6c6c6;
}

/* floating toolbar */
.mini {
    position: absolute;
    left: 238px;
    top: 127px;
    width: 301px;
    height: 61px;
    padding: 3px 0 0 3px;
    background: #fff;
    border: 1px solid #d0d0d0;
    box-shadow: 1px 1px 3px rgba(0,0,0,0.25);
}

.mini-row {
    height: 26px;
}

.mini .sel {
    height: 25px;
    padding: 0 5px 0 2px;
    font-size: 14px;
}

.mini .sel + .sel {
    margin-left: 1px;
    padding-left: 3px;
}

.mini-row2 {
    height: 27px;
    margin-top: 1px;
}

/* context menu */
.menu {
    position: absolute;
    left: 237px;
    top: 207px;
    width: 185px;
    height: 335px;
    background: #fff;
    border: 1px solid #c6c6c6;
    box-shadow: 1px 1px 3px rgba(0,0,0,0.3);
    font-size: 13px;
    letter-spacing: 0.3px;
    color: #5a5a5a;
}

.mi {
    display: flex;
    align-items: center;
    height: 26.7px;
    padding-right: 2px;
    white-space: nowrap;
}

.mi u {
    text-underline-offset: 2px;
}

.mi-ic {
    display: flex;
    align-items: center;
    justify-content: center;
    flex: none;
    width: 36px;
    padding-right: 9px;
}

.mi-title {
    flex: 1;
    align-self: stretch;
    margin-left: -9px;
    padding-left: 9px;
    line-height: 26px;
    background: #e6e6e6;
    font-weight: bold;
}

.mi-paste {
    height: 33.5px;
    padding: 7px 0 0 36px;
}

.mi.off {
    color: #bdbdbd;
}

.msep {
    height: 1px;
    margin: 0 2px 2px 36px;
    background: #e2e2e2;
}

.pointer {
    position: absolute;
    left: 296px;
    top: 352px;
}
```
